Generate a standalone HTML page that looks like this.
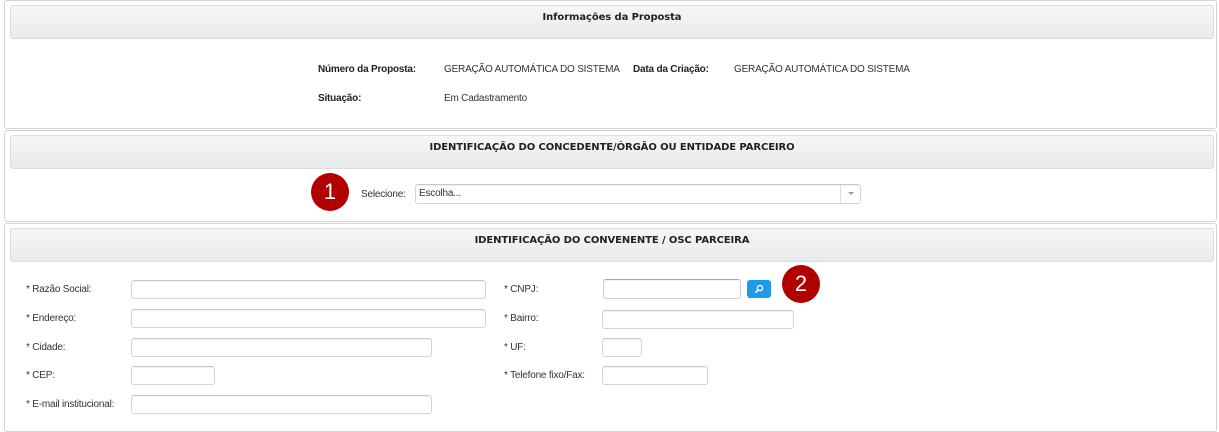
<!DOCTYPE html>
<html><head><meta charset="utf-8"><style>
body{margin:0;width:1219px;height:432px;background:#fff;font-family:"Liberation Sans",sans-serif;font-size:10px;color:#333;position:relative;overflow:hidden}
.a{position:absolute}
.panel{position:absolute;left:4px;width:1211px;border:1px solid #d4d4d4;border-radius:3px;background:#fff}
.hdr{position:absolute;left:10px;width:1202px;height:32px;border:1px solid #dcdcdc;border-radius:3px;background:linear-gradient(#f6f6f7,#e9eaec);font-weight:bold;font-size:10px;color:#222;text-align:center;line-height:24px;font-family:"DejaVu Sans",sans-serif;letter-spacing:-0.1px}
.in{position:absolute;height:17px;border:1px solid #d5d5d5;border-top-color:#c8c8c8;border-radius:3px;background:#fff;box-shadow:inset 0 1px 1px rgba(0,0,0,.06)}
.lb{position:absolute;font-size:10px;color:#333;letter-spacing:-0.2px}
.b{font-weight:bold;color:#222}
.c{position:absolute;width:38px;height:38px;border-radius:50%;background:#b20000;color:#fff;font-size:22px;text-align:center;line-height:37px}
</style></head><body>
<div class="panel" style="top:0;height:127px"></div>
<div class="hdr" style="top:5px">Informações da Proposta</div>
<div class="lb b" style="left:318px;top:64px">Número da Proposta:</div>
<div class="lb" style="left:444px;top:64px">GERAÇÃO AUTOMÁTICA DO SISTEMA</div>
<div class="lb b" style="left:633px;top:64px">Data da Criação:</div>
<div class="lb" style="left:734px;top:64px">GERAÇÃO AUTOMÁTICA DO SISTEMA</div>
<div class="lb b" style="left:318px;top:93px">Situação:</div>
<div class="lb" style="left:444px;top:93px">Em Cadastramento</div>

<div class="panel" style="top:130px;height:90px"></div>
<div class="hdr" style="top:135px">IDENTIFICAÇÃO DO CONCEDENTE/ÓRGÃO OU ENTIDADE PARCEIRO</div>
<div class="c" style="left:311px;top:173px">1</div>
<div class="lb" style="left:361px;top:189px">Selecione:</div>
<div class="in" style="left:415px;top:184px;width:444px;height:18px"></div>
<div class="lb" style="left:419px;top:188px">Escolha...</div>
<div class="a" style="left:840px;top:185px;width:1px;height:18px;background:#ddd"></div>
<div class="a" style="left:848px;top:192px;border-left:3px solid transparent;border-right:3px solid transparent;border-top:3px solid #999"></div>

<div class="panel" style="top:223px;height:207px"></div>
<div class="hdr" style="top:228px">IDENTIFICAÇÃO DO CONVENENTE / OSC PARCEIRA</div>
<div class="lb" style="left:26px;top:284px">* Razão Social:</div>
<div class="in" style="left:131px;top:280px;width:353px"></div>
<div class="lb" style="left:26px;top:313px">* Endereço:</div>
<div class="in" style="left:131px;top:309px;width:353px"></div>
<div class="lb" style="left:26px;top:342px">* Cidade:</div>
<div class="in" style="left:131px;top:338px;width:299px"></div>
<div class="lb" style="left:26px;top:370px">* CEP:</div>
<div class="in" style="left:131px;top:366px;width:82px"></div>
<div class="lb" style="left:26px;top:399px">* E-mail institucional:</div>
<div class="in" style="left:131px;top:395px;width:299px"></div>

<div class="lb" style="left:504px;top:284px">* CNPJ:</div>
<div class="in" style="left:603px;top:279px;width:136px;height:18px;border-color:#aaa #ccc #ccc #ccc"></div>
<div class="a" style="left:747px;top:280px;width:24px;height:18px;border-radius:3px;background:#1e9be8"></div>
<svg class="a" style="left:753px;top:284px" width="12" height="11" viewBox="0 0 12 11"><circle cx="7" cy="4" r="2.6" fill="none" stroke="#fff" stroke-width="1.4"/><path d="M5 6L2.5 8.5" stroke="#fff" stroke-width="1.6"/></svg>
<div class="c" style="left:782px;top:265px">2</div>
<div class="lb" style="left:504px;top:313px">* Bairro:</div>
<div class="in" style="left:602px;top:310px;width:190px"></div>
<div class="lb" style="left:504px;top:342px">* UF:</div>
<div class="in" style="left:602px;top:338px;width:38px"></div>
<div class="lb" style="left:504px;top:370px">* Telefone fixo/Fax:</div>
<div class="in" style="left:602px;top:366px;width:104px"></div>
</body></html>
